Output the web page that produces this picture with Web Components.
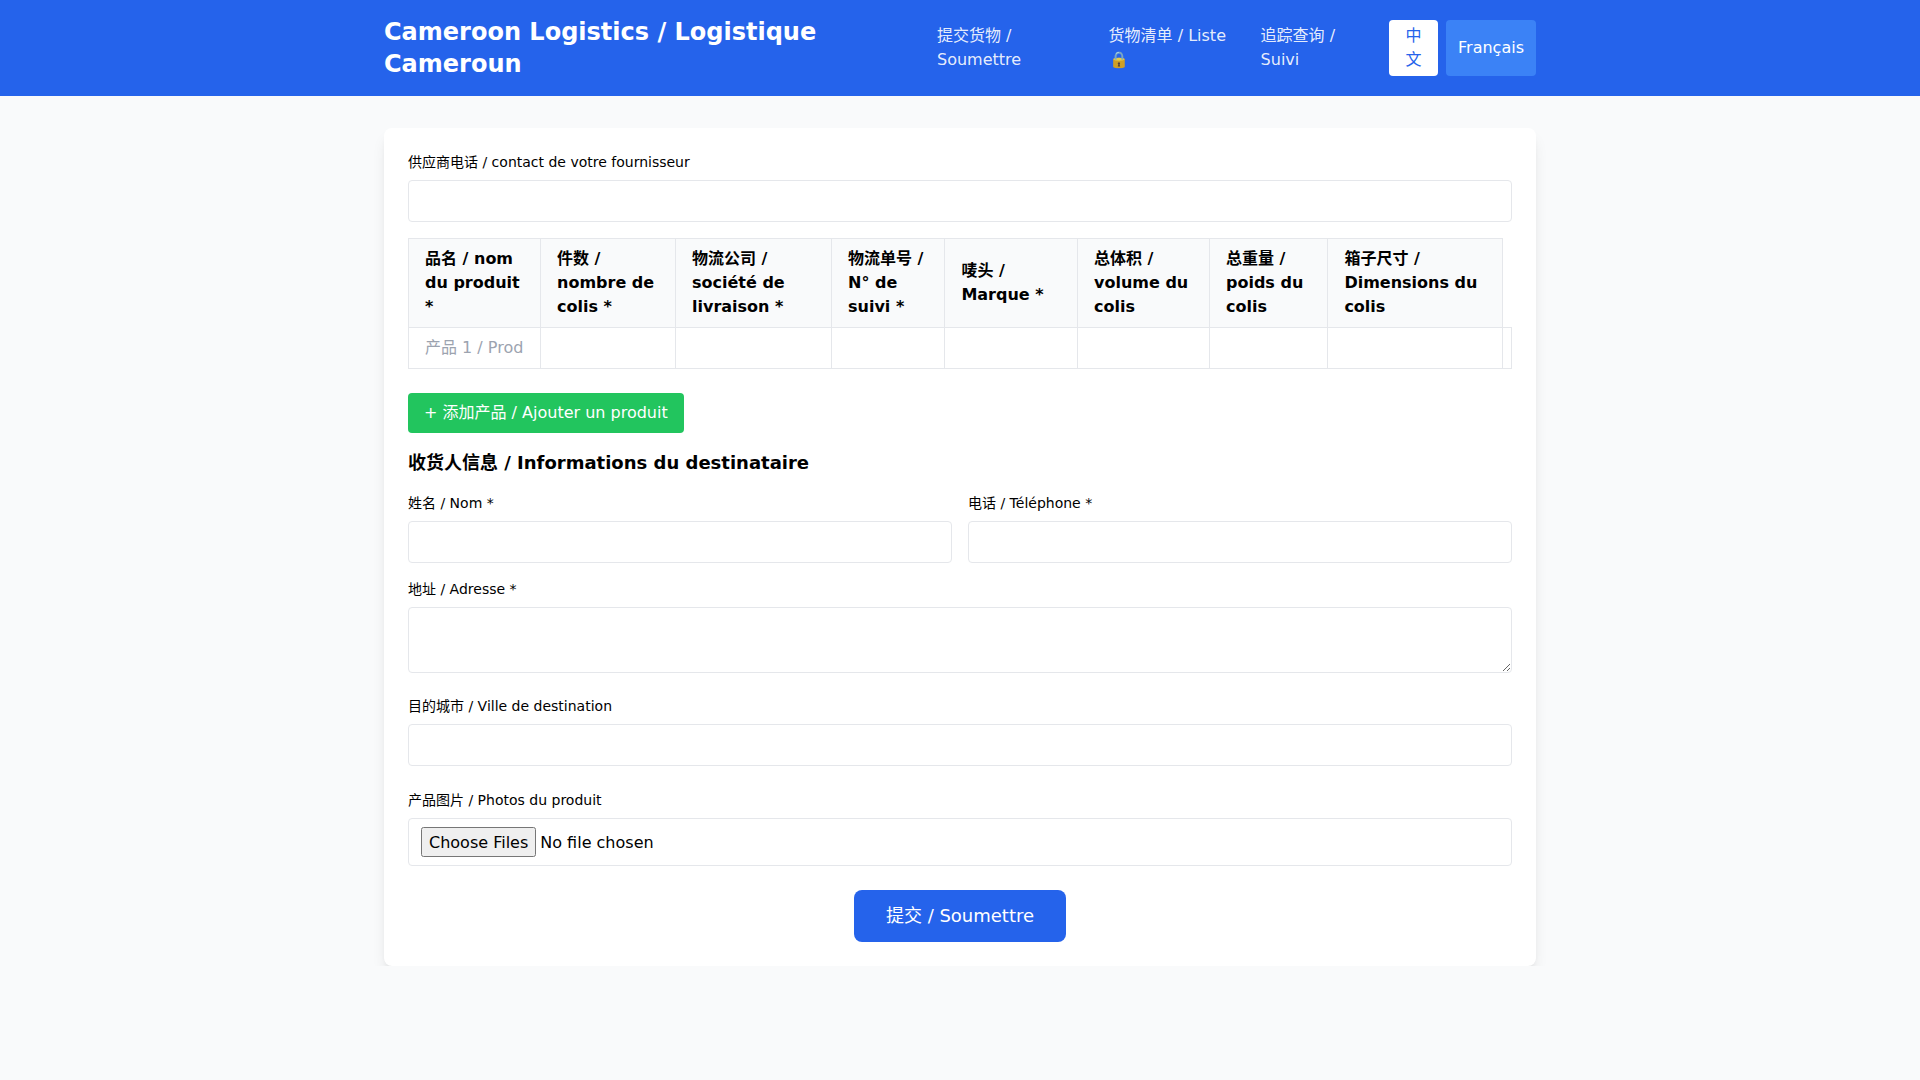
<!DOCTYPE html>
<html>
<head>
<meta charset="utf-8">
<title>Cameroon Logistics / Logistique Cameroun</title>
<style>
  body {
    margin: 0;
    background: #f9fafb;
    color: #000;
    font: 16px/24px "DejaVu Sans", "Noto Sans CJK SC", sans-serif;
  }
</style>
</head>
<body>
<app-header>
  <nav-link slot="nav" style="width:171.6px">提交货物 / Soumettre</nav-link>
  <nav-link slot="nav" style="width:152px">货物清单 / Liste 🔒</nav-link>
  <nav-link slot="nav" style="width:128.4px">追踪查询 / Suivi</nav-link>
  <lang-button slot="nav" active style="width:49px;margin-right:8px">中文</lang-button>
  <lang-button slot="nav" style="width:90px">Français</lang-button>
</app-header>
<shipment-form></shipment-form>

<script>
class AppHeader extends HTMLElement {
    connectedCallback() {
        this.attachShadow({ mode: 'open' }).innerHTML = `
          <style>
            :host { display: block; background: #2563eb; color: #fff; }
            .inner { width: 1152px; margin: 0 auto; padding: 16px 0; display: flex; align-items: center; }
            h1 { flex: 1; margin: 0; padding-right: 100px; font-size: 24px; line-height: 32px; font-weight: 700; }
            nav { display: flex; align-items: center; }
          </style>
          <div class="inner">
            <h1>Cameroon Logistics / Logistique Cameroun</h1>
            <nav><slot name="nav"></slot></nav>
          </div>`;
    }
}

class NavLink extends HTMLElement {
    connectedCallback() {
        this.attachShadow({ mode: 'open' }).innerHTML = `
          <style>
            :host { display: block; box-sizing: border-box; padding-right: 24px; color: rgba(255,255,255,.9); }
          </style>
          <slot></slot>`;
    }
}

class LangButton extends HTMLElement {
    connectedCallback() {
        this.attachShadow({ mode: 'open' }).innerHTML = `
          <style>
            :host { display: block; box-sizing: border-box; }
            button {
              display: block; width: 100%; height: 56px; padding: 4px 12px;
              border: 0; border-radius: 4px; font: inherit; background: #3b82f6; color: #fff;
            }
            :host([active]) button { background: #fff; color: #2563eb; }
          </style>
          <button type="button"><slot></slot></button>`;
    }
}

class FormField extends HTMLElement {
    connectedCallback() {
        const type = this.getAttribute('type') || 'text';
        let control = `<input type="${type}"${type === 'file' ? ' multiple' : ''}>`;
        if (type === 'textarea') control = '<textarea rows="2"></textarea>';
        this.attachShadow({ mode: 'open' }).innerHTML = `
          <style>
            :host { display: block; margin-bottom: 16px; }
            :host([spaced]) { margin-bottom: 24px; }
            label { display: block; margin-bottom: 8px; font-size: 14px; line-height: 20px; }
            input, textarea {
              box-sizing: border-box; width: 100%; padding: 8px 12px; margin: 0;
              border: 1px solid #e5e7eb; border-radius: 4px; background: #fff;
              font: inherit; color: inherit; outline: 0;
            }
            input { display: block; }
            input[type=file] { height: 48px; line-height: 24px; }
            input::file-selector-button { font: inherit; line-height: 24px; height: 30px; padding: 0 6px; }
            textarea { resize: vertical; }
          </style>
          <label><slot></slot></label>
          ${control}`;
    }
}

class ShipmentTable extends HTMLElement {
    static get columns() {
        return [
            ['品名 / nom du produit *', 132],
            ['件数 / nombre de colis *', 135],
            ['物流公司 / société de livraison *', 156],
            ['物流单号 / N° de suivi *', 113.4],
            ['唛头 / Marque *', 132.6],
            ['总体积 / volume du colis', 132],
            ['总重量 / poids du colis', 118.4],
            ['箱子尺寸 / Dimensions du colis', 174.6]
        ];
    }

    connectedCallback() {
        const cols = ShipmentTable.columns;
        const colTags = cols.map(c => `<col style="width:${c[1]}px">`).join('');
        const heads = cols.map(c => `<th>${c[0]}</th>`).join('');
        const cells = cols.map((c, i) =>
            `<td><input type="text"${i === 0 ? ' placeholder="产品 1 / Produit 1"' : ''}></td>`).join('');
        this.attachShadow({ mode: 'open' }).innerHTML = `
          <style>
            :host { display: block; margin-bottom: 24px; }
            table { width: 1103px; table-layout: fixed; border-collapse: collapse; }
            th, td { border: 1px solid #e5e7eb; }
            th { padding: 8px 16px; background: #f9fafb; font-weight: 700; text-align: left; }
            td { padding: 0; }
            input {
              display: block; box-sizing: border-box; width: 100%; height: 40px; padding: 7px 16px 9px; margin: 0;
              border: 0; background: transparent; font: inherit; outline: 0;
            }
            input::placeholder { color: #9ca3af; opacity: 1; }
          </style>
          <table>
            <colgroup>${colTags}<col style="width:9px"></colgroup>
            <thead><tr>${heads}</tr></thead>
            <tbody><tr>${cells}<td></td></tr></tbody>
          </table>`;
    }
}

class ShipmentForm extends HTMLElement {
    connectedCallback() {
        this.attachShadow({ mode: 'open' }).innerHTML = `
          <style>
            :host { display: block; width: 1152px; margin: 32px auto 0; }
            form {
              padding: 24px; background: #fff; border-radius: 8px;
              box-shadow: 0 10px 15px -3px rgba(0,0,0,.1), 0 4px 6px -4px rgba(0,0,0,.1);
            }
            .add {
              display: block; margin-bottom: 16px; padding: 8px 16px; border: 0; border-radius: 4px;
              background: #22c55e; color: #fff; font: inherit;
            }
            h3 { margin: 0 0 16px; font-size: 18px; line-height: 28px; font-weight: 700; }
            .two { display: grid; grid-template-columns: 1fr 1fr; gap: 16px; }
            .actions { display: flex; justify-content: center; }
            .submit {
              padding: 12px 32px; border: 0; border-radius: 8px;
              background: #2563eb; color: #fff; font: inherit; font-size: 18px; line-height: 28px;
            }
          </style>
          <form>
            <form-field>供应商电话 / contact de votre fournisseur</form-field>
            <shipment-table></shipment-table>
            <button type="button" class="add">+ 添加产品 / Ajouter un produit</button>
            <h3>收货人信息 / Informations du destinataire</h3>
            <div class="two">
              <form-field>姓名 / Nom *</form-field>
              <form-field>电话 / Téléphone *</form-field>
            </div>
            <form-field type="textarea">地址 / Adresse *</form-field>
            <form-field spaced>目的城市 / Ville de destination</form-field>
            <form-field spaced type="file">产品图片 / Photos du produit</form-field>
            <div class="actions"><button type="button" class="submit">提交 / Soumettre</button></div>
          </form>`;
    }
}

customElements.define('app-header', AppHeader);
customElements.define('nav-link', NavLink);
customElements.define('lang-button', LangButton);
customElements.define('form-field', FormField);
customElements.define('shipment-table', ShipmentTable);
customElements.define('shipment-form', ShipmentForm);
</script>
</body>
</html>
